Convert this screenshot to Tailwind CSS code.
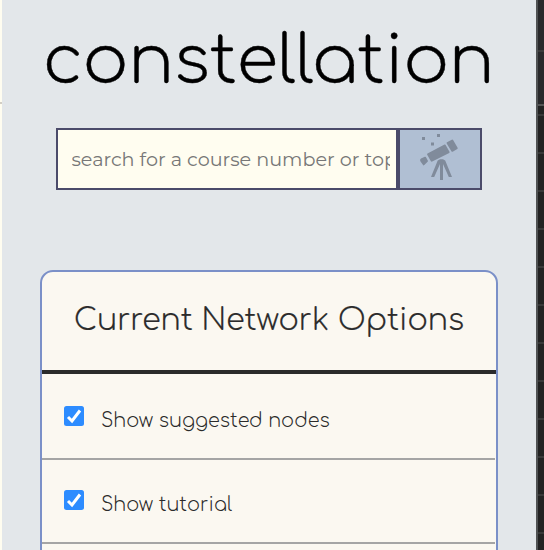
<!DOCTYPE html>
<html lang="en">
<head>
<meta charset="utf-8">
<title>constellation</title>
<script src="https://cdn.jsdelivr.net/npm/@tailwindcss/browser@4"></script>
</head>
<body class="w-[544px] h-[550px] overflow-hidden flex bg-[#e3e7ea] font-[Comfortaa,Lato,sans-serif]">
  <div class="w-[2px] shrink-0 bg-[#fffdf0] pt-[102px]"><div class="h-[2px] bg-[#d2cec4]"></div></div>
  <main class="w-[534px] h-[550px] shrink-0 overflow-hidden">
    <h1 class="h-[128px] pt-[24px] pl-[41px] font-light [-webkit-text-stroke:0.4px_black] text-[67.2px] leading-[76px] text-black whitespace-nowrap"><span>constellation</span></h1>
    <form class="flex ml-[54px] w-[426px] h-[62px]">
      <div class="w-[342px] h-[62px] border-2 border-[#4b4b6a] bg-[#fffdf0] pl-[13.500px] pr-[6px] flex items-center">
        <div class="w-full overflow-hidden whitespace-nowrap font-[Montserrat,Lato,sans-serif] text-[19.2px] leading-[28px] text-[#777]"><span>search for a course number or topic</span></div>
      </div>
      <button type="button" aria-label="Search" class="w-[84px] h-[62px] border-2 border-[#4b4b6a] bg-[#b0bfd3]">
        <svg class="block w-[80px] h-[58px]" viewBox="400 130 80 58" fill="#808b9b">
          <path d="M422 137h3v3h-3zM437 134h3v3h-3zM431 142.500h3v3h-3z"/>
          <path d="M447 142.300l4.800-2.600q.8-.4 1.300.4l4.500 7.700q.4.800-.3 1.300l-4.600 2.600q-.8.400-1.300-.4l-4.700-7.700q-.4-.8.300-1.300zM427.500 153.500l17-9q.6-.3 1 .3l4 7q.3.700-.3 1.100l-17 8.600q-.8.400-1.300-.3l-3.700-6.500q-.4-.8.300-1.200zM421 158.500l3.800-1.700q.7-.3 1.100.3l2 3.700q.3.600-.3 1l-3.300 3.300q-.5.500-1.100.2l-3-4.200q-.5-1.700.8-2.600z"/>
          <path d="M437.700 160.500l2.300-1.300h3l2.200 1.300 6.800 16.500h-3.200l-5.800-13V180h-3v-16L434.200 177H431z"/>
        </svg>
      </button>
    </form>
    <section class="mt-[80px] ml-[38px] w-[458px] h-[300px] border-2 border-[#7b90c8] rounded-[13px] bg-[#fbf8f1] text-[#2b2b2b]">
      <h2 class="h-[102px] border-b-4 border-[#2b2b2b] pt-[28px] pl-[32px] font-light [-webkit-text-stroke:0.2px_#2b2b2b] text-[30px] leading-[42px] whitespace-nowrap"><span>Current Network Options</span></h2>
      <div class="h-[86px] mr-[1px] border-b-2 border-[#a5a5a5] flex items-start pl-[22px] pt-[32px]">
        <svg class="w-[20px] h-[20px] shrink-0" viewBox="0 0 20 20"><rect width="20" height="20" rx="2.500" fill="#2d8cff"/><path d="M4 11l4 4 8-10.500" fill="none" stroke="#fff" stroke-width="3"/></svg>
        <span class="ml-[17px] mt-[1px] font-light text-[19.2px] leading-[28px] whitespace-nowrap">Show suggested nodes</span>
      </div>
      <div class="h-[84px] mr-[1px] border-b-2 border-[#a5a5a5] flex items-start pl-[22px] pt-[30px]">
        <svg class="w-[20px] h-[20px] shrink-0" viewBox="0 0 20 20"><rect width="20" height="20" rx="2.500" fill="#2d8cff"/><path d="M4 11l4 4 8-10.500" fill="none" stroke="#fff" stroke-width="3"/></svg>
        <span class="ml-[17px] mt-[1px] font-light text-[19.2px] leading-[28px] whitespace-nowrap">Show tutorial</span>
      </div>
    </section>
  </main>
  <aside class="w-[8px] h-[550px] shrink-0 border-l-2 border-[#505253] bg-[#222]">
    <div class="h-[104px] bg-[#29292b] pt-[50px]"><div class="h-[2px] bg-[#3b3b3b]"></div></div>
    <div class="h-[2px] bg-[#555]"></div>
    <div class="h-[8px]"></div>
    <div class="h-[436px] bg-[repeating-linear-gradient(to_bottom,#383838_0_2px,#222_2px_38px)]"></div>
  </aside>
</body>
</html>
